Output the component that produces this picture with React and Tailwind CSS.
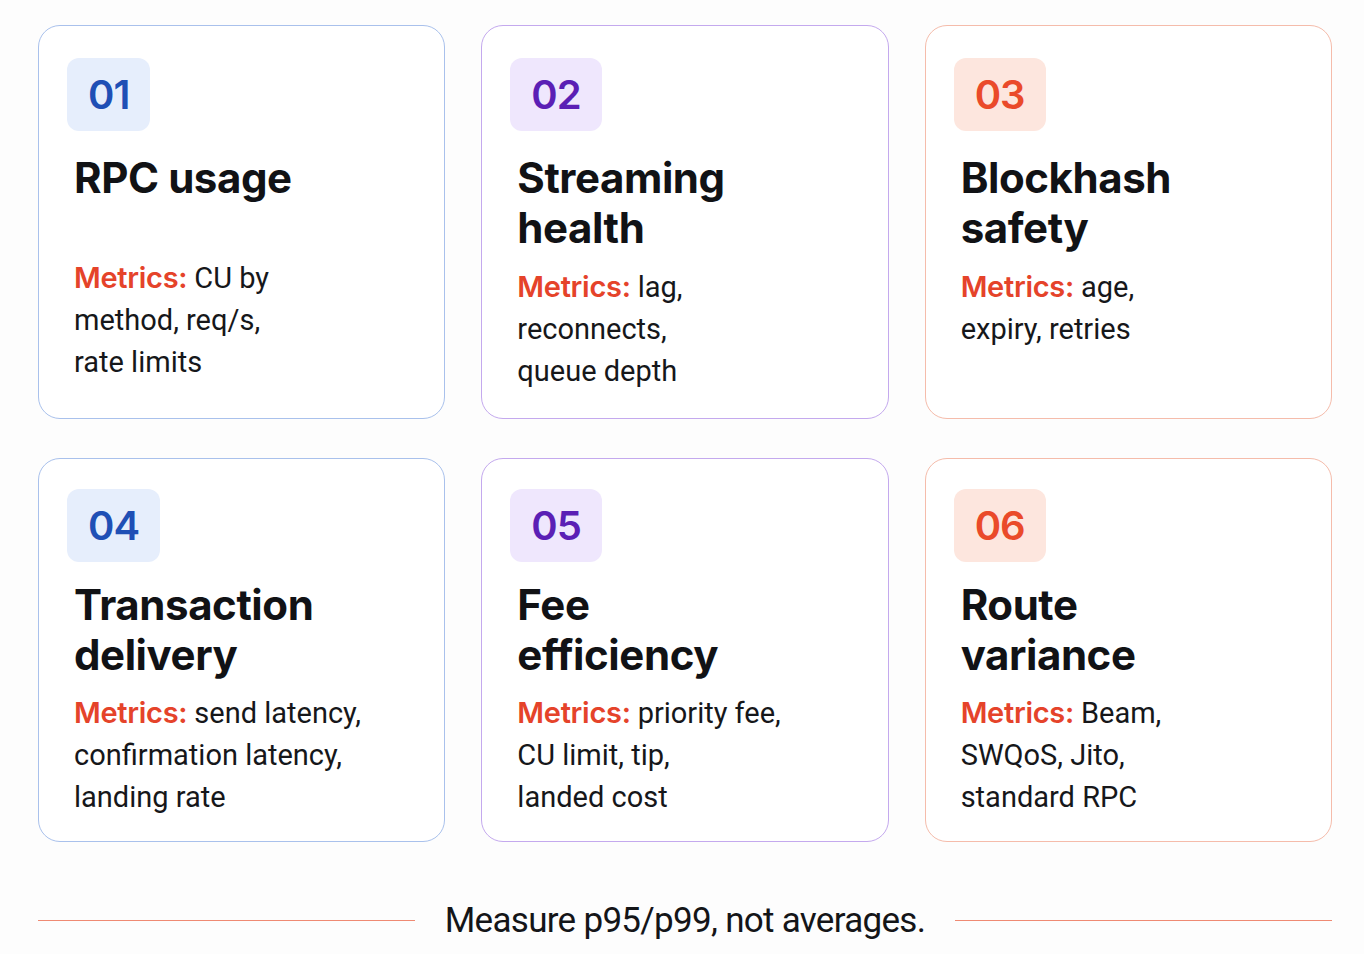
const cards = [
  {
    num: '01',
    title: ['RPC usage'],
    lines: ['CU by', 'method, req/s,', 'rate limits'],
    tone: 'blue',
    titleClass: 'min-h-[104px]',
  },
  {
    num: '02',
    title: ['Streaming', 'health'],
    lines: ['lag,', 'reconnects,', 'queue depth'],
    tone: 'purple',
    titleClass: 'mb-[13px]',
  },
  {
    num: '03',
    title: ['Blockhash', 'safety'],
    lines: ['age,', 'expiry, retries'],
    tone: 'orange',
    titleClass: 'mb-[13px]',
  },
  {
    num: '04',
    title: ['Transaction', 'delivery'],
    lines: ['send latency,', 'confirmation latency,', 'landing rate'],
    tone: 'blue',
    titleClass: 'mb-[12px]',
  },
  {
    num: '05',
    title: ['Fee', 'efficiency'],
    lines: ['priority fee,', 'CU limit, tip,', 'landed cost'],
    tone: 'purple',
    titleClass: 'mb-[12px]',
  },
  {
    num: '06',
    title: ['Route', 'variance'],
    lines: ['Beam,', 'SWQoS, Jito,', 'standard RPC'],
    tone: 'orange',
    titleClass: 'mb-[12px]',
  },
];

const tones = {
  blue: {
    card: 'border-[#a9c1ec]',
    badge: 'bg-[#e6eefc] text-[#1f4fb5]',
  },
  purple: {
    card: 'border-[#c4a9ee]',
    badge: 'bg-[#efe7fd] text-[#5b1fb5]',
  },
  orange: {
    card: 'border-[#f5bcab]',
    badge: 'bg-[#fde6de] text-[#ea4a2a]',
  },
};

function Card({ card, row }) {
  const tone = tones[card.tone];
  return (
    <div
      className={`rounded-[22px] border-[1.5px] bg-white pl-[35px] pr-[20px] ${tone.card} ${
        row === 0 ? 'pt-[32px]' : 'pt-[30px]'
      }`}
    >
      {/* Number badge */}
      <div
        className={`-ml-[7px] inline-flex h-[73px] items-center justify-center rounded-[12px] px-[21px] text-[40px] font-semibold leading-none tracking-tight ${tone.badge}`}
        style={{ fontFamily: 'Inter, sans-serif' }}
      >
        {card.num}
      </div>

      {/* Title */}
      <h2
        className={`${row === 0 ? 'mt-[22px]' : 'mt-[18px]'} text-[42px] font-bold leading-[50px] tracking-[-0.01em] text-[#111215] ${card.titleClass}`}
        style={{ fontFamily: 'Inter, sans-serif' }}
      >
        {card.title.map((t) => (
          <div key={t}>{t}</div>
        ))}
      </h2>

      {/* Metrics */}
      <div
        className="text-[29px] leading-[42px] text-[#16171a]"
        style={{ fontFamily: 'Roboto, sans-serif' }}
      >
        {card.lines.map((l, i) => (
          <div key={l}>
            {i === 0 && (
              <span
                className="font-semibold tracking-[-0.01em] text-[#e5432a]"
                style={{ fontFamily: 'Inter, sans-serif' }}
              >
                Metrics:{' '}
              </span>
            )}
            {l}
          </div>
        ))}
      </div>
    </div>
  );
}

export default function App() {
  return (
    <div className="min-h-screen w-[1364px] bg-[#fdfdfd] pl-[38px] pr-[32px] pt-[25px]">
      <div className="grid grid-cols-3 grid-rows-[394px_384px] gap-x-[36px] gap-y-[39px]">
        {cards.map((c, i) => (
          <Card key={c.num} card={c} row={i < 3 ? 0 : 1} />
        ))}
      </div>

      {/* Footer note */}
      <div className="mt-[61px] flex items-center gap-[30px]">
        <div className="h-[1.5px] flex-1 bg-[#ef8a73]" />
        <p
          className="text-[35px] leading-none tracking-[-0.02em] text-[#141518]"
          style={{ fontFamily: 'Roboto, sans-serif' }}
        >
          Measure p95/p99, not averages.
        </p>
        <div className="h-[1.5px] flex-1 bg-[#ef8a73]" />
      </div>
    </div>
  );
}
